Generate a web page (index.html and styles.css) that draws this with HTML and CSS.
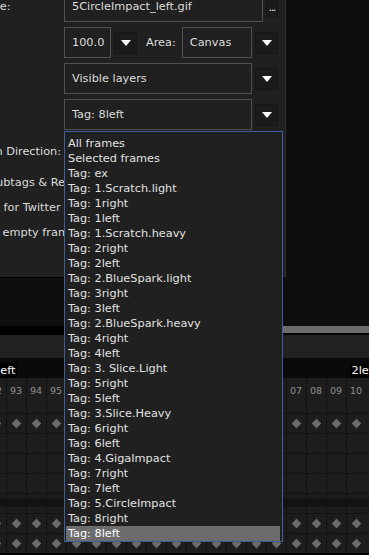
FILE: index.html
```html
<!DOCTYPE html>
<html lang="en">

<head>
    <meta charset="UTF-8">
    <title>Export</title>
    <link rel="stylesheet" href="styles.css">
</head>

<body>

    <div class="editor">
        <div class="dialog">
            <div class="form">
                <span class="lbl">Output File:</span>
                <div class="field">
                    <div class="box grow">5CircleImpact_left.gif</div>
                    <span class="btn btn-dots">...</span>
                </div>

                <span class="lbl">Resize:</span>
                <div class="field">
                    <div class="box box-scale">100.0</div>
                    <span class="btn"><span class="tri"></span></span>
                    <span class="area-lbl">Area:</span>
                    <div class="box grow">Canvas</div>
                    <span class="btn"><span class="tri"></span></span>
                </div>

                <span class="lbl">Layers:</span>
                <div class="field">
                    <div class="box grow">Visible layers</div>
                    <span class="btn"><span class="tri"></span></span>
                </div>

                <span class="lbl">Frames:</span>
                <div class="field">
                    <div class="box grow">Tag: 8left</div>
                    <span class="btn"><span class="tri"></span></span>
                </div>

                <span class="lbl row-dir">Animation Direction:</span>
                <div class="field row-dir">
                    <div class="box grow">Forward</div>
                    <span class="btn"><span class="tri"></span></span>
                </div>

                <div class="check"><span class="chk"></span>Play subtags &amp; Repeats</div>
                <div class="check"><span class="chk"></span>Export for Twitter</div>
                <div class="check"><span class="chk"></span>Ignore empty frames</div>
            </div>
        </div>
    </div>

    <div class="hscroll"><div class="thumb"></div></div>
    <div class="toolbar"></div>
    <div class="tags">
        <span class="tag tag-first">1left</span>
        <span class="tag tag-last">2left</span>
    </div>
    <div id="timeline"></div>

    <!-- lista aberta do combo de frames -->
    <div class="popup">
        <div>All frames</div>
        <div>Selected frames</div>
        <div>Tag: ex</div>
        <div>Tag: 1.Scratch.light</div>
        <div>Tag: 1right</div>
        <div>Tag: 1left</div>
        <div>Tag: 1.Scratch.heavy</div>
        <div>Tag: 2right</div>
        <div>Tag: 2left</div>
        <div>Tag: 2.BlueSpark.light</div>
        <div>Tag: 3right</div>
        <div>Tag: 3left</div>
        <div>Tag: 2.BlueSpark.heavy</div>
        <div>Tag: 4right</div>
        <div>Tag: 4left</div>
        <div>Tag: 3. Slice.Light</div>
        <div>Tag: 5right</div>
        <div>Tag: 5left</div>
        <div>Tag: 3.Slice.Heavy</div>
        <div>Tag: 6right</div>
        <div>Tag: 6left</div>
        <div>Tag: 4.GigaImpact</div>
        <div>Tag: 7right</div>
        <div>Tag: 7left</div>
        <div>Tag: 5.CircleImpact</div>
        <div>Tag: 8right</div>
        <div class="sel">Tag: 8left</div>
    </div>

    <script>
        // monta a grade da timeline (frames 92..110)
        const linhas = ["head", "key", "empty", "empty", "empty", "band", "key", "key"];
        const timeline = document.getElementById("timeline");

        linhas.forEach(tipo => {
            const row = document.createElement("div");
            row.className = "row row-" + tipo;
            for (let f = 92; f <= 110; f++) {
                const cell = document.createElement("span");
                cell.className = "cell";
                if (tipo === "head") {
                    cell.textContent = String(f % 100).padStart(2, "0");
                }
                if (tipo === "key") {
                    cell.innerHTML = '<span class="diamond"></span>';
                }
                row.appendChild(cell);
            }
            timeline.appendChild(row);
        });
    </script>

</body>

</html>
```

FILE: styles.css
```css
* {
    box-sizing: border-box;
}

body {
    margin: 0;
    width: 369px;
    height: 555px;
    overflow: hidden;
    position: relative;
    background: #000;
    font-family: "DejaVu Sans", Verdana, sans-serif;
    font-size: 11.3px;
    color: #dcdcdc;
}

.editor {
    display: flow-root;
    height: 326px;
    background: #0e0e0e;
}

.dialog {
    margin: -9px 0 0 -55px;
    width: 341px;
    height: 287px;
    background: #202020;
    border-right: 1px solid #2e2e2e;
    border-bottom: 1px solid #000;
}

.form {
    display: grid;
    grid-template-columns: 119px 214px;
    row-gap: 5px;
}

.lbl {
    display: flex;
    align-items: center;
    white-space: nowrap;
}

.field {
    display: flex;
    align-items: center;
    gap: 3px;
    height: 31px;
}

.row-dir {
    margin-top: 1px;
}

.box {
    height: 31px;
    border: 1px solid #505050;
    padding: 0 7px;
    display: flex;
    align-items: center;
    white-space: nowrap;
    overflow: hidden;
}

.grow {
    flex: 1;
}

.box-scale {
    width: 47px;
}

.area-lbl {
    margin: 0 3px 0 6px;
}

.btn {
    width: 23px;
    height: 22px;
    background: #1b1b1b;
    border: 1px solid #161616;
    display: flex;
    align-items: center;
    justify-content: center;
    color: #fff;
}

.btn-dots {
    width: 12px;
    align-items: flex-end;
    padding-bottom: 4px;
    font-size: 10px;
    letter-spacing: -1px;
}

.tri {
    border-left: 5px solid transparent;
    border-right: 5px solid transparent;
    border-top: 6px solid #fff;
}

.check {
    grid-column: 1 / -1;
    display: flex;
    align-items: center;
    gap: 5px;
    height: 20px;
    white-space: nowrap;
}

.chk {
    width: 13px;
    height: 13px;
    border: 1px solid #4c4c4c;
    background: #1a1a1a;
}

/* timeline */
.hscroll {
    height: 9px;
    background: #000;
    padding-left: 200px;
}

.hscroll .thumb {
    height: 7px;
    background: #6b6b6b;
}

.toolbar {
    height: 23px;
    background: #222;
}

.tags {
    height: 20px;
    background: #0a0a0a;
    display: flex;
    align-items: flex-end;
}

.tag {
    height: 15px;
    line-height: 15px;
    padding: 0 2px;
    background: #000;
    color: #fff;
    white-space: nowrap;
}

.tag-first {
    margin-left: -12px;
}

.tag-last {
    margin-left: auto;
    margin-right: -10px;
}

.row {
    display: flex;
    margin-left: -14px;
    height: 20px;
    border-top: 1px solid #121212;
    background: #1d1d1d;
}

.cell {
    flex: 0 0 20px;
    border-left: 1px solid #121212;
    display: flex;
    align-items: center;
    justify-content: center;
}

.row-head {
    height: 35px;
    border-top: none;
}

.row-head .cell {
    align-items: flex-start;
    justify-content: flex-start;
    padding: 7px 0 0 3px;
    font-size: 9.5px;
    color: #8f8f8f;
}

.row-band {
    position: relative;
}

.row-band::after {
    content: "";
    position: absolute;
    left: 0;
    right: 0;
    top: 4px;
    height: 9px;
    background: #131313;
}

.diamond {
    width: 9px;
    height: 9px;
    margin-left: -1px;
    background: #6a6a6a;
    border: 1px solid #0c0c0c;
    transform: rotate(45deg);
}

/* popup */
.popup {
    position: absolute;
    left: 64px;
    top: 131px;
    width: 219px;
    height: 411px;
    background: #202020;
    border: 1px solid #3e5d9b;
    padding: 4px 2px 0 1px;
}

.popup div {
    height: 15px;
    line-height: 15px;
    padding-left: 2px;
    white-space: nowrap;
    overflow: hidden;
    color: #e2e2e2;
}

.popup .sel {
    background: #6c6c6c;
    color: #fff;
}
```
